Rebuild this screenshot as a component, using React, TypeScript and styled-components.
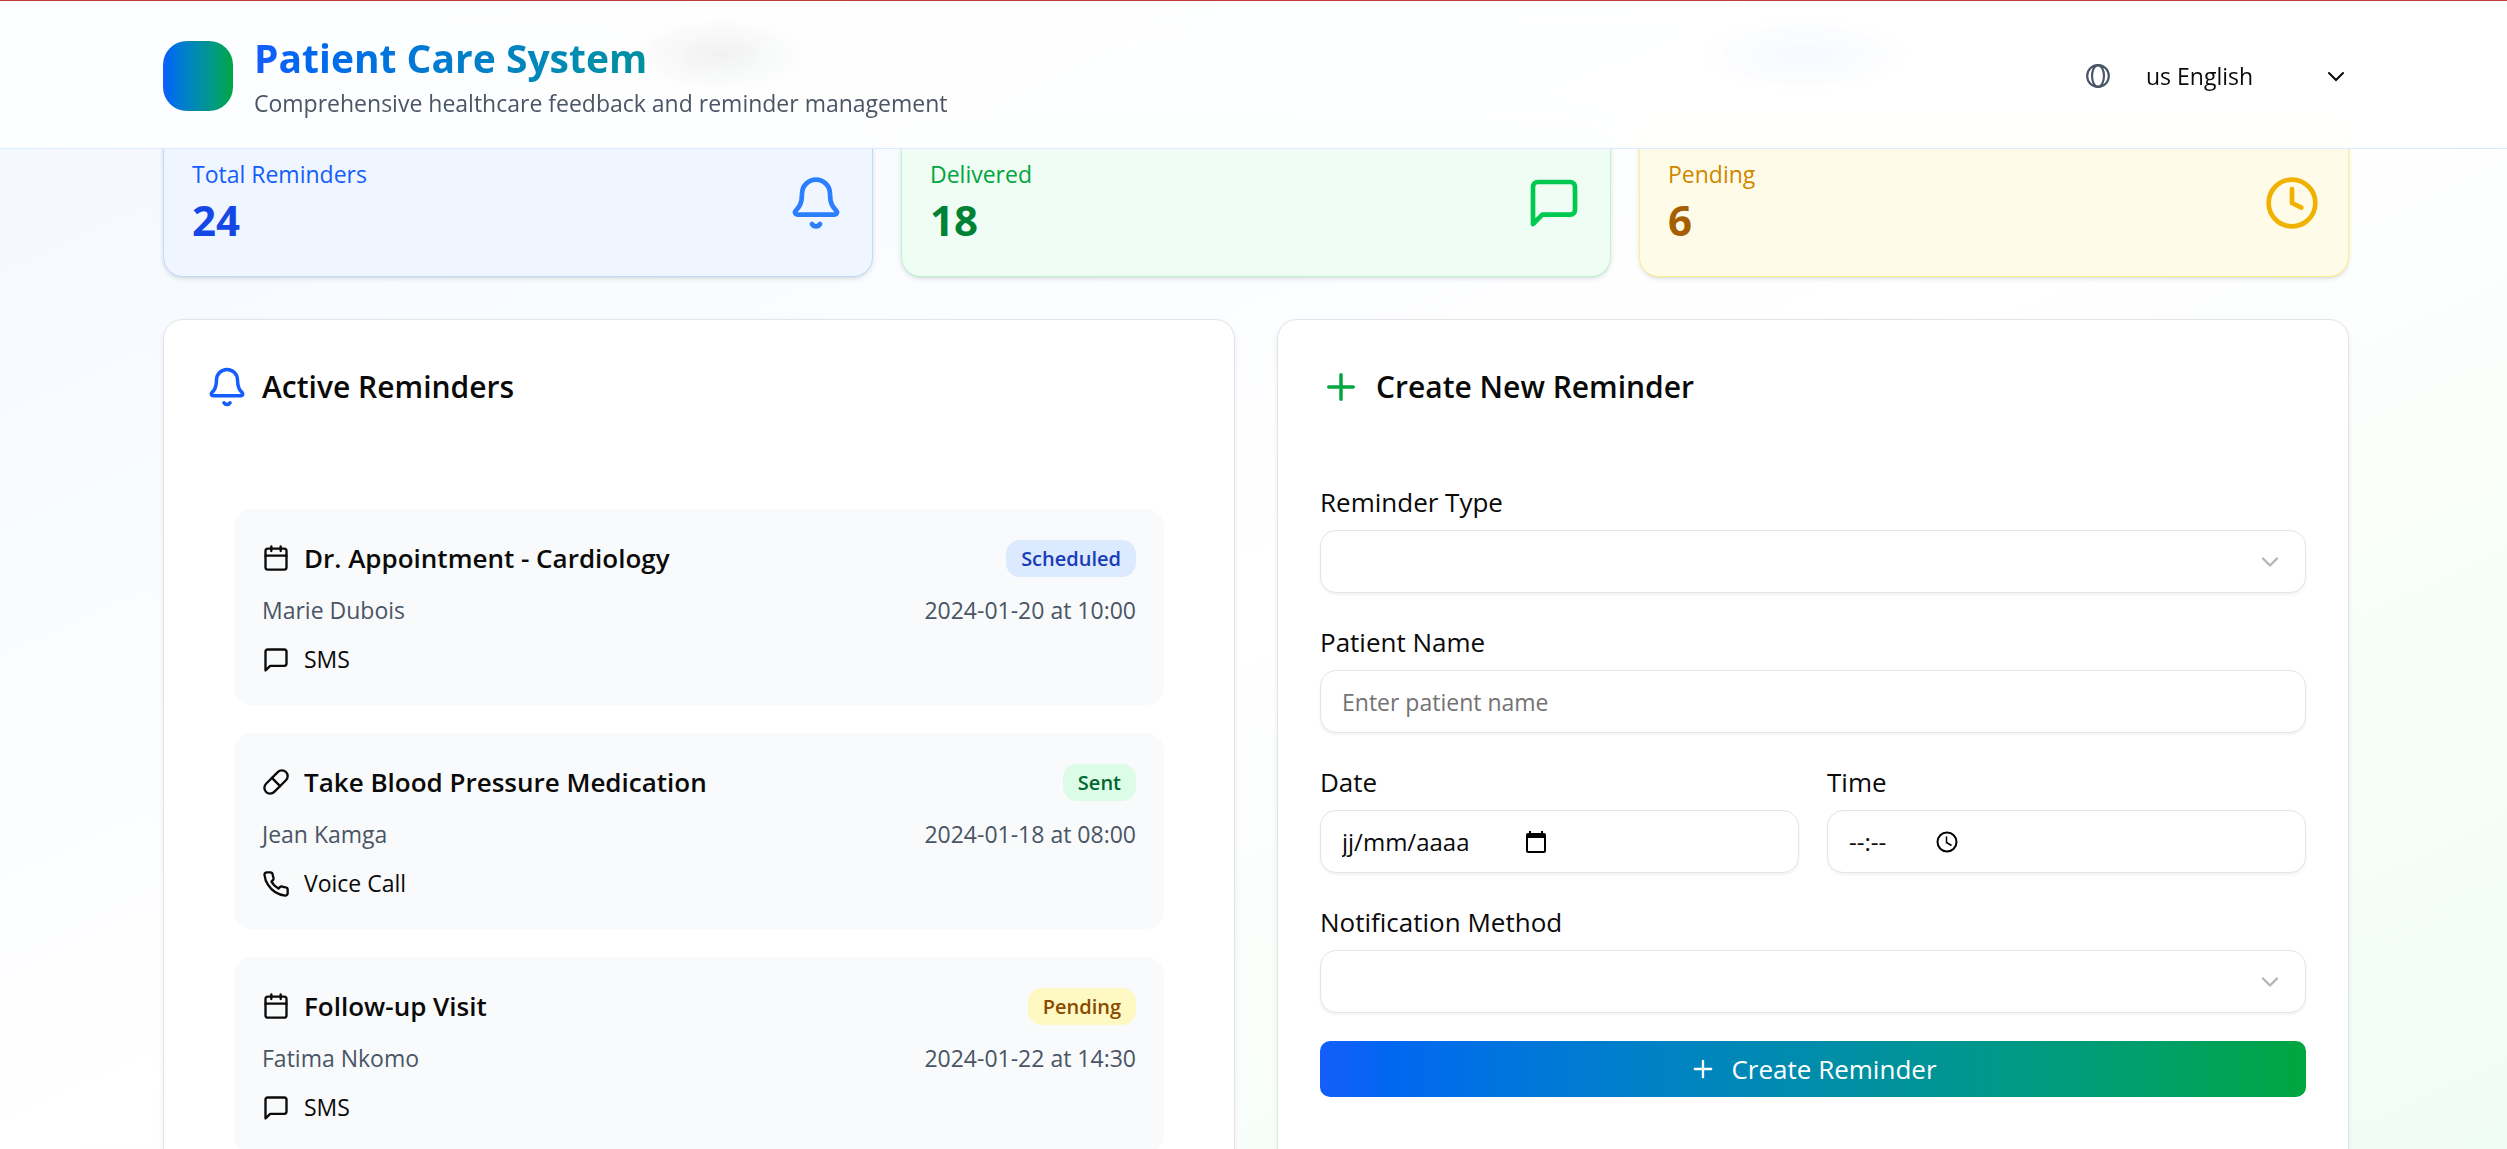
import React from "react";
import styled, { createGlobalStyle } from "styled-components";

const GlobalStyle = createGlobalStyle`
  *, *::before, *::after { box-sizing: border-box; }
  body {
    margin: 0;
    font-family: "Open Sans", "Noto Sans", sans-serif;
    font-size: 26px;
    line-height: 42px;
    color: #0a0a0a;
  }
  button, input, select { font: inherit; color: inherit; }
  h1, h2, h3, p, ul { margin: 0; padding: 0; }
`;

const Page = styled.div`
  height: 100vh;
  overflow: hidden;
  background: linear-gradient(to bottom right, #f3f8ff, #ffffff 50%, #f0fdf4);
`;

const Container = styled.div`
  max-width: 2242px;
  margin: 0 auto;
  padding: 0 28px;
`;

const Header = styled.header`
  position: fixed;
  inset: 0 0 auto 0;
  z-index: 10;
  padding: 29px 0 27px 5px;
  border-top: 1px solid #c43a3a;
  border-bottom: 1px solid #dbeafe;
  background:
    radial-gradient(ellipse 90px 38px at 720px 54px, rgba(0, 0, 0, 0.05), transparent),
    radial-gradient(ellipse 110px 40px at 1805px 54px, rgba(21, 93, 252, 0.04), transparent),
    rgba(255, 255, 255, 0.8);
  backdrop-filter: blur(14px);
`;

const HeaderRow = styled.div`
  display: flex;
  align-items: center;
  justify-content: space-between;
`;

const Brand = styled.div`
  display: flex;
  align-items: center;
  gap: 21px;
`;

const Logo = styled.div`
  width: 70px;
  height: 70px;
  border-radius: 24px;
  background: linear-gradient(to right in oklab, #155dfc, #00a63e);
`;

const BrandTitle = styled.h1`
  font-size: 39px;
  line-height: 56px;
  font-weight: 700;
  color: transparent;
  background: linear-gradient(to right in oklab, #155dfc, #00a63e);
  background-clip: text;
`;

const BrandText = styled.p`
  font-size: 23px;
  line-height: 35px;
  color: #4a5565;
`;

const Language = styled.label`
  display: flex;
  align-items: center;
  gap: 14px;
  color: #4a5565;
`;

const LanguageBox = styled.span`
  display: grid;
  align-items: center;
  width: 224px;
  color: #0a0a0a;

  & > * { grid-area: 1 / 1; }
  & > svg { justify-self: end; margin-right: 5px; pointer-events: none; }
`;

const LanguageSelect = styled.select`
  appearance: none;
  width: 100%;
  height: 56px;
  padding: 0 21px;
  border: 0;
  background: transparent;
  font-size: 23px;
`;

const Main = styled.main`
  padding: 128px 0 0 5px;
`;

const Stats = styled.section`
  display: grid;
  grid-template-columns: repeat(3, 1fr);
  gap: 28px;
`;

type Tone = "blue" | "green" | "yellow";

const tones = {
  blue: { bg: "#eff6ff", border: "#bedbff", label: "#155dfc", value: "#1447e6", icon: "#2b7fff", chip: "#dbeafe", chipText: "#193cb8" },
  green: { bg: "#f0fdf4", border: "#b9f8cf", label: "#00a63e", value: "#008236", icon: "#00c950", chip: "#dcfce7", chipText: "#016630" },
  yellow: { bg: "#fefce8", border: "#fff085", label: "#d08700", value: "#a65f00", icon: "#f0b100", chip: "#fef9c2", chipText: "#894b00" },
};

const StatCard = styled.article<{ $tone: Tone }>`
  display: flex;
  align-items: center;
  justify-content: space-between;
  padding: 28px;
  border: 1px solid ${(p) => tones[p.$tone].border};
  border-radius: 20px;
  background: ${(p) => tones[p.$tone].bg};
  box-shadow: 0 2px 5px rgba(0, 0, 0, 0.1), 0 2px 3px -2px rgba(0, 0, 0, 0.1);
  color: ${(p) => tones[p.$tone].icon};
`;

const StatLabel = styled.p<{ $tone: Tone }>`
  font-size: 23px;
  line-height: 35px;
  font-weight: 500;
  color: ${(p) => tones[p.$tone].label};
`;

const StatValue = styled.p<{ $tone: Tone }>`
  font-size: 42px;
  line-height: 56px;
  font-weight: 700;
  color: ${(p) => tones[p.$tone].value};
`;

const Panels = styled.div`
  display: grid;
  grid-template-columns: 1fr 1fr;
  gap: 42px;
  margin-top: 42px;
`;

const Panel = styled.section`
  padding: 46px 42px 42px;
  border: 1px solid #e5e5e5;
  border-radius: 20px;
  background: #ffffff;
  box-shadow: 0 2px 5px rgba(0, 0, 0, 0.08);
`;

const PanelTitle = styled.h2<{ $accent: string }>`
  display: flex;
  align-items: center;
  gap: 14px;
  margin-bottom: 73px;
  font-size: 30px;
  line-height: 42px;
  font-weight: 600;

  & > svg { color: ${(p) => p.$accent}; }
`;

const ReminderList = styled.ul`
  display: flex;
  flex-direction: column;
  gap: 28px;
  padding: 28px;
  list-style: none;
`;

const ReminderItem = styled.li`
  display: flex;
  flex-direction: column;
  gap: 14px;
  padding: 28px;
  border-radius: 18px;
  background: #f9fafb;
`;

const Line = styled.div`
  display: flex;
  align-items: center;
  justify-content: space-between;
`;

const ReminderTitle = styled.h3`
  display: flex;
  align-items: center;
  gap: 14px;
  font-size: 26px;
  line-height: 42px;
  font-weight: 600;
`;

const Meta = styled.span`
  font-size: 23px;
  line-height: 35px;
  color: #4a5565;
`;

const Method = styled.p`
  display: flex;
  align-items: center;
  gap: 14px;
  font-size: 23px;
  line-height: 35px;
`;

const Badge = styled.span<{ $tone: Tone }>`
  padding: 4px 15px;
  border-radius: 14px;
  font-size: 20px;
  line-height: 29px;
  font-weight: 600;
  background: ${(p) => tones[p.$tone].chip};
  color: ${(p) => tones[p.$tone].chipText};
`;

const Form = styled.form`
  display: flex;
  flex-direction: column;
  gap: 28px;
`;

const Field = styled.div`
  display: flex;
  flex-direction: column;
  gap: 7px;
`;

const FieldPair = styled.div`
  display: grid;
  grid-template-columns: 1fr 1fr;
  gap: 28px;
`;

const Label = styled.label`
  font-size: 26px;
  line-height: 42px;
`;

const Box = styled.div`
  display: grid;
  align-items: center;
  height: 63px;
  border: 1px solid #e5e5e5;
  border-radius: 16px;
  background: #ffffff;
  box-shadow: 0 2px 3px rgba(0, 0, 0, 0.05);
  font-size: 23px;
`;

const SelectBox = styled(Box)`
  & > * { grid-area: 1 / 1; }
  & > svg { justify-self: end; margin-right: 21px; color: #b5b5b5; pointer-events: none; }
`;

const DateBox = styled(Box)`
  grid-template-columns: auto auto;
  justify-content: start;
  column-gap: 28px;
  padding: 0 21px;
  font-size: 24px;
`;

const TextBox = styled(Box)`
  padding: 0 21px;
`;

const Select = styled.select`
  appearance: none;
  width: 100%;
  height: 100%;
  padding: 0 21px;
  border: 0;
  background: transparent;
`;

const Input = styled.input<{ $width?: string; $hint?: string }>`
  width: ${(p) => p.$width ?? "100%"};
  height: 100%;
  padding: 0;
  border: 0;
  outline: 0;
  background: transparent;

  &::placeholder { color: ${(p) => p.$hint ?? "#737373"}; opacity: 1; }
`;

const PickerButton = styled.button`
  display: flex;
  padding: 0;
  border: 0;
  background: none;
  color: #000000;
`;

const Submit = styled.button`
  display: flex;
  align-items: center;
  justify-content: center;
  gap: 14px;
  height: 56px;
  border: 0;
  border-radius: 10px;
  background: linear-gradient(to right in oklab, #155dfc, #00a63e);
  color: #ffffff;
  font-size: 26px;
  font-weight: 500;
`;

const Svg = ({ size, children }: { size: number; children: React.ReactNode }) => (
  <svg width={size} height={size} viewBox="0 0 24 24" fill="none" stroke="currentColor" strokeWidth={2} strokeLinecap="round" strokeLinejoin="round" aria-hidden="true">
    {children}
  </svg>
);

const BellIcon = ({ size }: { size: number }) => (
  <Svg size={size}>
    <path d="M10.268 21a2 2 0 0 0 3.464 0" />
    <path d="M3.262 15.326A1 1 0 0 0 4 17h16a1 1 0 0 0 .74-1.673C19.41 13.956 18 12.499 18 8A6 6 0 0 0 6 8c0 4.499-1.411 5.956-2.738 7.326" />
  </Svg>
);

const MessageIcon = ({ size }: { size: number }) => (
  <Svg size={size}>
    <path d="M21 15a2 2 0 0 1-2 2H7l-4 4V5a2 2 0 0 1 2-2h14a2 2 0 0 1 2 2z" />
  </Svg>
);

const ClockIcon = ({ size }: { size: number }) => (
  <Svg size={size}>
    <circle cx="12" cy="12" r="10" />
    <path d="M12 6v6l4 2" />
  </Svg>
);

const PlusIcon = ({ size }: { size: number }) => (
  <Svg size={size}>
    <path d="M5 12h14M12 5v14" />
  </Svg>
);

const CalendarIcon = ({ size }: { size: number }) => (
  <Svg size={size}>
    <path d="M8 2v4M16 2v4M3 10h18" />
    <rect width="18" height="18" x="3" y="4" rx="2" />
  </Svg>
);

const PillIcon = ({ size }: { size: number }) => (
  <Svg size={size}>
    <path d="m10.5 20.5 10-10a4.95 4.95 0 1 0-7-7l-10 10a4.95 4.95 0 1 0 7 7Z" />
    <path d="m8.5 8.5 7 7" />
  </Svg>
);

const PhoneIcon = ({ size }: { size: number }) => (
  <Svg size={size}>
    <path d="M22 16.92v3a2 2 0 0 1-2.18 2 19.79 19.79 0 0 1-8.63-3.07 19.5 19.5 0 0 1-6-6 19.79 19.79 0 0 1-3.07-8.67A2 2 0 0 1 4.11 2h3a2 2 0 0 1 2 1.72 12.84 12.84 0 0 0 .7 2.81 2 2 0 0 1-.45 2.11L8.09 9.91a16 16 0 0 0 6 6l1.27-1.27a2 2 0 0 1 2.11-.45 12.84 12.84 0 0 0 2.81.7A2 2 0 0 1 22 16.92z" />
  </Svg>
);

const ChevronIcon = ({ size }: { size: number }) => (
  <Svg size={size}>
    <path d="m6 9 6 6 6-6" />
  </Svg>
);

const GlobeIcon = () => (
  <Svg size={26}>
    <circle cx="12" cy="12" r="10" />
    <ellipse cx="12" cy="12" rx="5.5" ry="10" />
  </Svg>
);

const SelectArrow = () => (
  <svg width="16" height="16" viewBox="0 0 16 16" fill="none" stroke="currentColor" strokeWidth="2" strokeLinecap="round" aria-hidden="true">
    <path d="m1 5 7 7 7-7" />
  </svg>
);

const DatePickerIcon = () => (
  <svg width="24" height="24" viewBox="0 0 24 24" fill="currentColor" aria-hidden="true">
    <path d="M20 3h-1V1h-2v2H7V1H5v2H4a2 2 0 0 0-2 2v16c0 1.1.9 2 2 2h16a2 2 0 0 0 2-2V5a2 2 0 0 0-2-2Zm0 18H4V8h16v13Z" />
  </svg>
);

const TimePickerIcon = () => (
  <svg width="24" height="24" viewBox="0 0 24 24" fill="none" stroke="currentColor" aria-hidden="true">
    <circle cx="12" cy="12" r="9.5" strokeWidth="2" />
    <path d="M11.5 6.5V12.5l5 3" strokeWidth="1.5" />
  </svg>
);

const stats = [
  { label: "Total Reminders", value: 24, tone: "blue" as Tone, Icon: BellIcon },
  { label: "Delivered", value: 18, tone: "green" as Tone, Icon: MessageIcon },
  { label: "Pending", value: 6, tone: "yellow" as Tone, Icon: ClockIcon },
];

const reminders = [
  { title: "Dr. Appointment - Cardiology", patient: "Marie Dubois", when: "2024-01-20 at 10:00", status: "Scheduled", tone: "blue" as Tone, method: "SMS", Icon: CalendarIcon, MethodIcon: MessageIcon },
  { title: "Take Blood Pressure Medication", patient: "Jean Kamga", when: "2024-01-18 at 08:00", status: "Sent", tone: "green" as Tone, method: "Voice Call", Icon: PillIcon, MethodIcon: PhoneIcon },
  { title: "Follow-up Visit", patient: "Fatima Nkomo", when: "2024-01-22 at 14:30", status: "Pending", tone: "yellow" as Tone, method: "SMS", Icon: CalendarIcon, MethodIcon: MessageIcon },
];

export default function App() {
  return (
    <Page>
      <GlobalStyle />
      <Header>
        <Container>
          <HeaderRow>
            <Brand>
              <Logo />
              <div>
                <BrandTitle>Patient Care System</BrandTitle>
                <BrandText>Comprehensive healthcare feedback and reminder management</BrandText>
              </div>
            </Brand>
            <Language htmlFor="language">
              <GlobeIcon />
              <LanguageBox>
                <LanguageSelect id="language" aria-label="Language" defaultValue="en">
                  <option value="en">us English</option>
                </LanguageSelect>
                <SelectArrow />
              </LanguageBox>
            </Language>
          </HeaderRow>
        </Container>
      </Header>
      <Main>
        <Container>
          <Stats>
            {stats.map(({ label, value, tone, Icon }) => (
              <StatCard key={label} $tone={tone}>
                <div>
                  <StatLabel $tone={tone}>{label}</StatLabel>
                  <StatValue $tone={tone}>{value}</StatValue>
                </div>
                <Icon size={56} />
              </StatCard>
            ))}
          </Stats>
          <Panels>
            <Panel>
              <PanelTitle $accent="#155dfc">
                <BellIcon size={42} />
                Active Reminders
              </PanelTitle>
              <ReminderList>
                {reminders.map(({ title, patient, when, status, tone, method, Icon, MethodIcon }) => (
                  <ReminderItem key={title}>
                    <Line>
                      <ReminderTitle><Icon size={28} />{title}</ReminderTitle>
                      <Badge $tone={tone}>{status}</Badge>
                    </Line>
                    <Line>
                      <Meta>{patient}</Meta>
                      <Meta>{when}</Meta>
                    </Line>
                    <Method><MethodIcon size={28} />{method}</Method>
                  </ReminderItem>
                ))}
              </ReminderList>
            </Panel>
            <Panel>
              <PanelTitle $accent="#00a63e">
                <PlusIcon size={42} />
                Create New Reminder
              </PanelTitle>
              <Form onSubmit={(e) => e.preventDefault()}>
                <Field>
                  <Label htmlFor="type">Reminder Type</Label>
                  <SelectBox>
                    <Select id="type" defaultValue=""><option value="" /></Select>
                    <ChevronIcon size={28} />
                  </SelectBox>
                </Field>
                <Field>
                  <Label htmlFor="patient">Patient Name</Label>
                  <TextBox><Input id="patient" type="text" placeholder="Enter patient name" /></TextBox>
                </Field>
                <FieldPair>
                  <Field>
                    <Label htmlFor="date">Date</Label>
                    <DateBox>
                      <Input id="date" type="text" placeholder="jj/mm/aaaa" $width="154px" $hint="#0a0a0a" />
                      <PickerButton type="button" aria-label="Pick a date"><DatePickerIcon /></PickerButton>
                    </DateBox>
                  </Field>
                  <Field>
                    <Label htmlFor="time">Time</Label>
                    <DateBox>
                      <Input id="time" type="text" placeholder="--:--" $width="58px" $hint="#0a0a0a" />
                      <PickerButton type="button" aria-label="Pick a time"><TimePickerIcon /></PickerButton>
                    </DateBox>
                  </Field>
                </FieldPair>
                <Field>
                  <Label htmlFor="method">Notification Method</Label>
                  <SelectBox>
                    <Select id="method" defaultValue=""><option value="" /></Select>
                    <ChevronIcon size={28} />
                  </SelectBox>
                </Field>
                <Submit type="submit"><PlusIcon size={28} />Create Reminder</Submit>
              </Form>
            </Panel>
          </Panels>
        </Container>
      </Main>
    </Page>
  );
}
